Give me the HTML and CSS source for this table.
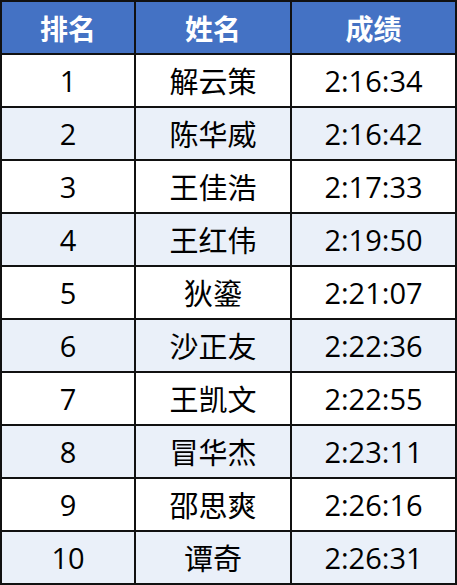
FILE: index.html
```html
<!DOCTYPE html>
<html lang="zh-CN">
<head>
<meta charset="utf-8">
<title>排名</title>
<link rel="stylesheet" href="styles.css">
</head>
<body>
<table class="rank">
  <colgroup>
    <col class="c1">
    <col class="c2">
    <col class="c3">
  </colgroup>
  <thead>
    <tr><th>排名</th><th>姓名</th><th>成绩</th></tr>
  </thead>
  <tbody>
    <tr><td class="num">1</td><td>解云策</td><td class="num">2:16:34</td></tr>
    <tr><td class="num">2</td><td>陈华威</td><td class="num">2:16:42</td></tr>
    <tr><td class="num">3</td><td>王佳浩</td><td class="num">2:17:33</td></tr>
    <tr><td class="num">4</td><td>王红伟</td><td class="num">2:19:50</td></tr>
    <tr><td class="num">5</td><td>狄鎏</td><td class="num">2:21:07</td></tr>
    <tr><td class="num">6</td><td>沙正友</td><td class="num">2:22:36</td></tr>
    <tr><td class="num">7</td><td>王凯文</td><td class="num">2:22:55</td></tr>
    <tr><td class="num">8</td><td>冒华杰</td><td class="num">2:23:11</td></tr>
    <tr><td class="num">9</td><td>邵思爽</td><td class="num">2:26:16</td></tr>
    <tr><td class="num">10</td><td>谭奇</td><td class="num">2:26:31</td></tr>
  </tbody>
</table>
</body>
</html>
```
FILE: styles.css
```css
html, body {
  margin: 0;
  padding: 0;
  background: #ffffff;
}

.rank {
  border-collapse: collapse;
  table-layout: fixed;
  width: 455px;
  font-family: "Open Sans", "Noto Sans CJK SC", sans-serif;
  color: #000000;
}

.c1 { width: 134px; }
.c2 { width: 156px; }
.c3 { width: 165px; }

.rank th,
.rank td {
  border: 2px solid #111111;
  height: 51px;
  padding: 0;
  text-align: center;
  vertical-align: middle;
  line-height: 1;
}

.rank th {
  background: #4472c4;
  color: #ffffff;
  font-family: "Noto Sans CJK SC", sans-serif;
  font-weight: 700;
  font-size: 28px;
}

.rank td {
  font-family: "Noto Sans CJK SC", sans-serif;
  font-size: 29px;
  font-weight: 400;
}

.rank td.num {
  font-family: "Open Sans", "Noto Sans CJK SC", sans-serif;
  font-size: 29px;
}

.rank tbody tr:nth-child(even) td {
  background: #eaf0f9;
}
```
